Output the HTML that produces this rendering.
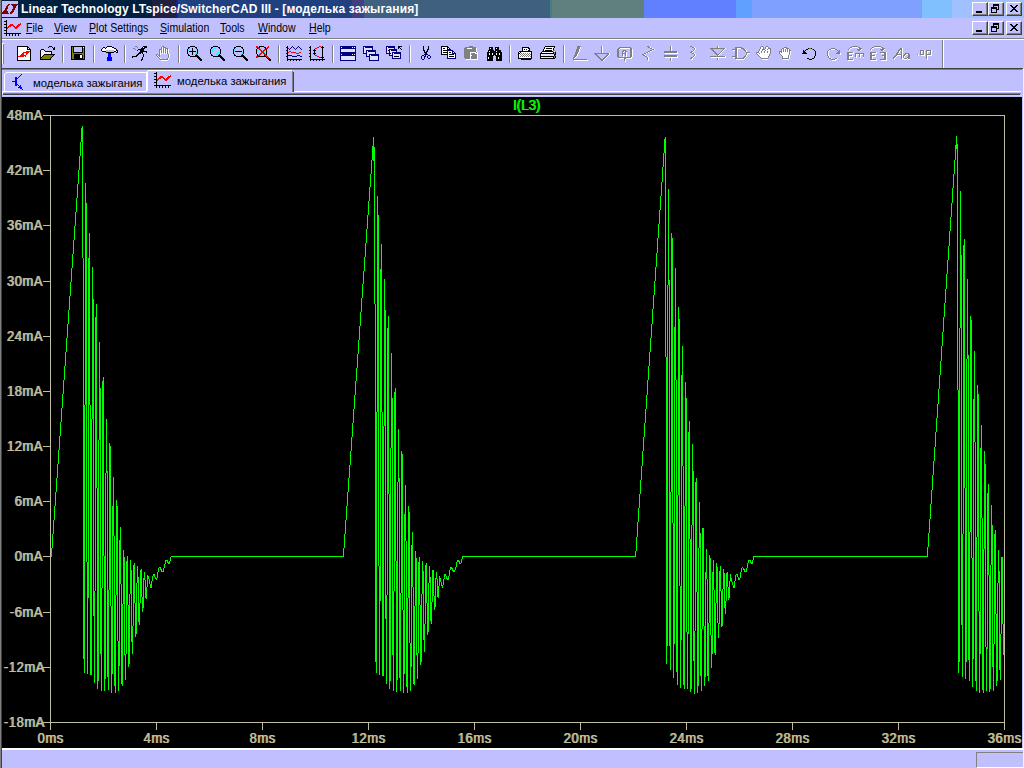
<!DOCTYPE html>
<html><head><meta charset="utf-8">
<style>
html,body{margin:0;padding:0;width:1024px;height:768px;overflow:hidden;background:#c0c0ff;font-family:"Liberation Sans",sans-serif;}
.a{position:absolute;}
.bl{position:absolute;left:0;width:1024px;}
#title span{position:absolute;}
.capbtn{position:absolute;width:16px;height:14px;box-sizing:border-box;background:#c0c0ff;
 border-top:1px solid #fff;border-left:1px solid #fff;border-right:1px solid #404040;border-bottom:1px solid #404040;}
.capbtn::after{content:"";position:absolute;left:0;top:0;right:0;bottom:0;border-right:1px solid #808080;border-bottom:1px solid #808080;}
.menu{position:absolute;top:21px;font-size:12px;color:#000;line-height:14px;white-space:nowrap;transform:scaleX(0.88);transform-origin:left;}
.menu u{text-decoration:underline;text-decoration-thickness:1px;text-underline-offset:1px;}
.sep{position:absolute;top:45px;width:1px;height:18px;background:#808080;border-right:1px solid #fff;}
.ylab{position:absolute;left:0;width:42.7px;text-align:right;font-size:14px;color:#c0c0a0;line-height:14px;text-shadow:1px 0 0 #c0c0a0;letter-spacing:0.7px;transform:scaleX(0.92);transform-origin:right;}
.xlab{position:absolute;width:60px;text-align:center;font-size:14px;color:#c0c0a0;line-height:14px;top:731px;text-shadow:1px 0 0 #c0c0a0;letter-spacing:0.7px;text-indent:0.7px;transform:scaleX(0.92);}
.ic{position:absolute;top:46px;}
</style></head><body>
<!-- left/right window borders -->
<div class="a" style="left:0;top:0;width:1px;height:768px;background:#808080"></div>
<div class="a" style="left:1px;top:0;width:1px;height:768px;background:#404040"></div>

<!-- title bar -->
<div class="a" style="left:2px;top:0;width:1022px;height:18px;background:#002040"></div>
<div class="a" style="left:152px;top:0;width:24px;height:18px;background:#202040"></div>
<div class="a" style="left:176px;top:0;width:2px;height:18px;background:#202080"></div>
<div class="a" style="left:178px;top:0;width:174px;height:18px;background:#204080"></div>
<div class="a" style="left:352px;top:0;width:12px;height:18px;background:#404080"></div>
<div class="a" style="left:364px;top:0;width:186px;height:18px;background:#406080"></div>
<div class="a" style="left:550px;top:0;width:2px;height:18px;background:#408080"></div>
<div class="a" style="left:552px;top:0;width:92px;height:18px;background:#608080"></div>
<div class="a" style="left:644px;top:0;width:92px;height:18px;background:#6080ff"></div>
<div class="a" style="left:736px;top:0;width:16px;height:18px;background:#60a0ff"></div>
<div class="a" style="left:752px;top:0;width:170px;height:18px;background:#80a0ff"></div>
<div class="a" style="left:922px;top:0;width:30px;height:18px;background:#80c0ff"></div>
<div class="a" style="left:952px;top:0;width:72px;height:18px;background:#a0c0ff"></div>
<!-- logo -->
<div class="a" style="left:2px;top:1px;width:16px;height:16px;background:#c0c0ff"></div>
<div class="a" style="left:21px;top:2px;font-weight:bold;font-size:12px;color:#fff;line-height:14px;white-space:nowrap;letter-spacing:0.12px">Linear Technology LTspice/SwitcherCAD III - [моделька зажыгания]</div>
<div class="capbtn" style="left:972px;top:2px"></div>
<div class="capbtn" style="left:988px;top:2px"></div>
<div class="capbtn" style="left:1006px;top:2px"></div>

<!-- menu bar -->
<div class="menu" style="left:26px"><u>F</u>ile</div>
<div class="menu" style="left:54px"><u>V</u>iew</div>
<div class="menu" style="left:89px"><u>P</u>lot Settings</div>
<div class="menu" style="left:160px"><u>S</u>imulation</div>
<div class="menu" style="left:220px"><u>T</u>ools</div>
<div class="menu" style="left:258px"><u>W</u>indow</div>
<div class="menu" style="left:309px"><u>H</u>elp</div>
<div class="capbtn" style="left:972px;top:21px"></div>
<div class="capbtn" style="left:988px;top:21px"></div>
<div class="capbtn" style="left:1006px;top:21px"></div>
<div class="bl" style="left:2px;top:38px;height:1px;background:#808080"></div>
<div class="bl" style="left:2px;top:39px;height:1px;background:#fff"></div>

<!-- toolbar -->
<div class="a" style="left:2px;top:43px;width:2px;height:21px;background:#fff"></div>
<div class="a" style="left:3px;top:44px;width:1px;height:20px;background:#808080"></div>
<div class="a" style="left:942px;top:40px;width:1px;height:28px;background:#808080"></div>
<div class="a" style="left:943px;top:40px;width:1px;height:28px;background:#fff"></div>

<div class="sep" style="left:62px"></div>
<div class="sep" style="left:93px"></div>
<div class="sep" style="left:124px"></div>
<div class="sep" style="left:178px"></div>
<div class="sep" style="left:278px"></div>
<div class="sep" style="left:332px"></div>
<div class="sep" style="left:409px"></div>
<div class="sep" style="left:509px"></div>
<div class="sep" style="left:563px"></div>
<div class="a" style="left:2px;top:68px;width:1021px;height:1px;background:#404040"></div>
<div class="a" style="left:2px;top:69px;width:1021px;height:1px;background:#808080"></div>

<!-- tab strip -->
<svg class="a" style="left:0;top:69px" width="1024" height="28" shape-rendering="crispEdges">
 <!-- inactive tab -->
 <path fill="none" stroke="#fff" d="M4.5,22V5.5L6.5,3.5H146.5V22.5H2"/>
 <!-- active tab -->
 <path fill="none" stroke="#fff" d="M147.5,22V2.5L148.5,1.5H292"/>
 <path fill="none" stroke="#808080" d="M292.5,2V22.5"/>
 <path fill="none" stroke="#404040" d="M293.5,3V22.5"/>
 <path fill="none" stroke="#fff" d="M294,22.5H1021"/>
 <path fill="none" stroke="#fff" d="M2.5,22V25"/>
 <path fill="none" stroke="#808080" d="M3,24.5H1021"/>
 <path fill="none" stroke="#404040" d="M3,25.5H1020"/>
 <path fill="none" stroke="#d0d0ff" d="M2,26.5H1022"/>
</svg>
<div class="a" style="left:33px;top:77px;font-size:11.3px;line-height:13px;white-space:nowrap">моделька зажыгания</div>
<div class="a" style="left:177px;top:75px;font-size:11.3px;line-height:13px;white-space:nowrap">моделька зажыгания</div>

<!-- plot area -->
<div class="a" style="left:2px;top:97px;width:1020px;height:651px;background:#000"></div>
<div class="a" style="left:1022px;top:69px;width:1px;height:699px;background:#c0c0ff"></div>
<div class="a" style="left:1023px;top:68px;width:1px;height:700px;background:#f0f0ff"></div>

<svg class="a" style="left:0;top:0" width="1024" height="768" shape-rendering="crispEdges">
 <g stroke="#c0c0a0" fill="none">
  <path d="M50.5,115V723M1004.5,115V723M50,115.5H1005M50,722.5H1005"/>
  <path d="M43,115.5h7M43,170.5h7M43,225.5h7M43,281.5h7M43,336.5h7M43,391.5h7M43,446.5h7M43,501.5h7M43,556.5h7M43,612.5h7M43,667.5h7M43,722.5h7"/>
  <path d="M50.5,723v7M156.5,723v7M262.5,723v7M368.5,723v7M474.5,723v7M580.5,723v7M686.5,723v7M792.5,723v7M898.5,723v7M1004.5,723v7"/>
 </g>
 <g fill="#00ff00"><rect x="51" y="548" width="1" height="9"/><rect x="52" y="534" width="1" height="14"/><rect x="53" y="520" width="1" height="14"/><rect x="54" y="506" width="1" height="14"/><rect x="55" y="492" width="1" height="14"/><rect x="56" y="478" width="1" height="14"/><rect x="57" y="464" width="1" height="14"/><rect x="58" y="450" width="1" height="14"/><rect x="59" y="436" width="1" height="14"/><rect x="60" y="422" width="1" height="14"/><rect x="61" y="408" width="1" height="14"/><rect x="62" y="394" width="1" height="14"/><rect x="63" y="380" width="1" height="14"/><rect x="64" y="366" width="1" height="14"/><rect x="65" y="352" width="1" height="14"/><rect x="66" y="338" width="1" height="14"/><rect x="67" y="324" width="1" height="14"/><rect x="68" y="310" width="1" height="14"/><rect x="69" y="296" width="1" height="14"/><rect x="70" y="282" width="1" height="14"/><rect x="71" y="268" width="1" height="14"/><rect x="72" y="254" width="1" height="14"/><rect x="73" y="240" width="1" height="14"/><rect x="74" y="226" width="1" height="14"/><rect x="75" y="212" width="1" height="14"/><rect x="76" y="198" width="1" height="14"/><rect x="77" y="184" width="1" height="14"/><rect x="78" y="170" width="1" height="14"/><rect x="79" y="156" width="1" height="14"/><rect x="80" y="142" width="1" height="14"/><rect x="81" y="128" width="1" height="14"/><rect x="82" y="126" width="1" height="132"/><rect x="83" y="258" width="1" height="401"/><rect x="84" y="405" width="1" height="268"/><rect x="85" y="183" width="1" height="222"/><rect x="86" y="203" width="1" height="359"/><rect x="87" y="562" width="1" height="112"/><rect x="88" y="258" width="1" height="340"/><rect x="89" y="233" width="1" height="172"/><rect x="90" y="405" width="1" height="270"/><rect x="91" y="419" width="1" height="256"/><rect x="92" y="267" width="1" height="152"/><rect x="93" y="299" width="1" height="317"/><rect x="94" y="591" width="1" height="92"/><rect x="95" y="317" width="1" height="274"/><rect x="96" y="304" width="1" height="184"/><rect x="97" y="488" width="1" height="201"/><rect x="98" y="440" width="1" height="241"/><rect x="99" y="342" width="1" height="98"/><rect x="100" y="388" width="1" height="266"/><rect x="101" y="588" width="1" height="103"/><rect x="102" y="381" width="1" height="207"/><rect x="103" y="377" width="1" height="179"/><rect x="104" y="556" width="1" height="135"/><rect x="105" y="473" width="1" height="206"/><rect x="106" y="419" width="1" height="54"/><rect x="107" y="471" width="1" height="206"/><rect x="108" y="590" width="1" height="100"/><rect x="109" y="443" width="1" height="147"/><rect x="110" y="446" width="1" height="160"/><rect x="111" y="606" width="1" height="87"/><rect x="112" y="506" width="1" height="168"/><rect x="113" y="477" width="1" height="59"/><rect x="114" y="536" width="1" height="150"/><rect x="115" y="595" width="1" height="98"/><rect x="116" y="500" width="1" height="95"/><rect x="117" y="506" width="1" height="135"/><rect x="118" y="641" width="1" height="50"/><rect x="119" y="540" width="1" height="126"/><rect x="120" y="527" width="1" height="57"/><rect x="121" y="584" width="1" height="100"/><rect x="122" y="604" width="1" height="82"/><rect x="123" y="550" width="1" height="54"/><rect x="124" y="557" width="1" height="98"/><rect x="125" y="654" width="1" height="26"/><rect x="126" y="561" width="1" height="93"/><rect x="127" y="556" width="1" height="49"/><rect x="128" y="605" width="1" height="62"/><rect x="129" y="594" width="1" height="70"/><rect x="130" y="560" width="1" height="34"/><rect x="131" y="570" width="1" height="72"/><rect x="132" y="626" width="1" height="28"/><rect x="133" y="565" width="1" height="61"/><rect x="134" y="563" width="1" height="40"/><rect x="135" y="603" width="1" height="34"/><rect x="136" y="583" width="1" height="51"/><rect x="137" y="566" width="1" height="17"/><rect x="138" y="577" width="1" height="45"/><rect x="139" y="603" width="1" height="22"/><rect x="140" y="570" width="1" height="33"/><rect x="141" y="569" width="1" height="28"/><rect x="142" y="597" width="1" height="15"/><rect x="143" y="578" width="1" height="30"/><rect x="144" y="572" width="1" height="8"/><rect x="145" y="580" width="1" height="18"/><rect x="146" y="587" width="1" height="12"/><rect x="147" y="575" width="1" height="12"/><rect x="148" y="576" width="1" height="3"/><rect x="149" y="579" width="1" height="5"/><rect x="150" y="584" width="1" height="4"/><rect x="151" y="581" width="1" height="7"/><rect x="152" y="576" width="1" height="5"/><rect x="153" y="574" width="1" height="2"/><rect x="154" y="574" width="1" height="3"/><rect x="155" y="577" width="1" height="2"/><rect x="156" y="578" width="1" height="2"/><rect x="157" y="572" width="1" height="6"/><rect x="158" y="568" width="1" height="4"/><rect x="160" y="567" width="1" height="3"/><rect x="161" y="569" width="1" height="3"/><rect x="163" y="568" width="1" height="4"/><rect x="164" y="564" width="1" height="4"/><rect x="165" y="560" width="1" height="4"/><rect x="167" y="560" width="1" height="3"/><rect x="168" y="562" width="1" height="2"/><rect x="169" y="561" width="1" height="3"/><rect x="170" y="557" width="1" height="4"/><rect x="343" y="548" width="1" height="9"/><rect x="344" y="534" width="1" height="14"/><rect x="345" y="520" width="1" height="14"/><rect x="346" y="506" width="1" height="14"/><rect x="347" y="492" width="1" height="14"/><rect x="348" y="478" width="1" height="14"/><rect x="349" y="465" width="1" height="13"/><rect x="350" y="451" width="1" height="14"/><rect x="351" y="437" width="1" height="14"/><rect x="352" y="423" width="1" height="14"/><rect x="353" y="409" width="1" height="14"/><rect x="354" y="395" width="1" height="14"/><rect x="355" y="381" width="1" height="14"/><rect x="356" y="368" width="1" height="13"/><rect x="357" y="354" width="1" height="14"/><rect x="358" y="340" width="1" height="14"/><rect x="359" y="326" width="1" height="14"/><rect x="360" y="312" width="1" height="14"/><rect x="361" y="298" width="1" height="14"/><rect x="362" y="284" width="1" height="14"/><rect x="363" y="271" width="1" height="13"/><rect x="364" y="257" width="1" height="14"/><rect x="365" y="243" width="1" height="14"/><rect x="366" y="229" width="1" height="14"/><rect x="367" y="215" width="1" height="14"/><rect x="368" y="201" width="1" height="14"/><rect x="369" y="187" width="1" height="14"/><rect x="370" y="174" width="1" height="13"/><rect x="371" y="160" width="1" height="14"/><rect x="372" y="146" width="1" height="14"/><rect x="373" y="137" width="1" height="24"/><rect x="374" y="147" width="1" height="157"/><rect x="375" y="304" width="1" height="358"/><rect x="376" y="412" width="1" height="261"/><rect x="377" y="196" width="1" height="216"/><rect x="378" y="215" width="1" height="351"/><rect x="379" y="566" width="1" height="109"/><rect x="380" y="269" width="1" height="332"/><rect x="381" y="244" width="1" height="168"/><rect x="382" y="412" width="1" height="264"/><rect x="383" y="426" width="1" height="250"/><rect x="384" y="279" width="1" height="147"/><rect x="385" y="310" width="1" height="309"/><rect x="386" y="595" width="1" height="89"/><rect x="387" y="328" width="1" height="267"/><rect x="388" y="316" width="1" height="178"/><rect x="389" y="494" width="1" height="195"/><rect x="390" y="448" width="1" height="233"/><rect x="391" y="353" width="1" height="95"/><rect x="392" y="398" width="1" height="257"/><rect x="393" y="591" width="1" height="100"/><rect x="394" y="392" width="1" height="199"/><rect x="395" y="388" width="1" height="173"/><rect x="396" y="561" width="1" height="131"/><rect x="397" y="482" width="1" height="198"/><rect x="398" y="429" width="1" height="53"/><rect x="399" y="478" width="1" height="200"/><rect x="400" y="593" width="1" height="98"/><rect x="401" y="451" width="1" height="142"/><rect x="402" y="454" width="1" height="156"/><rect x="403" y="610" width="1" height="83"/><rect x="404" y="514" width="1" height="160"/><rect x="405" y="485" width="1" height="56"/><rect x="406" y="541" width="1" height="146"/><rect x="407" y="598" width="1" height="95"/><rect x="408" y="506" width="1" height="92"/><rect x="409" y="512" width="1" height="131"/><rect x="410" y="643" width="1" height="48"/><rect x="411" y="545" width="1" height="122"/><rect x="412" y="532" width="1" height="55"/><rect x="413" y="587" width="1" height="97"/><rect x="414" y="606" width="1" height="79"/><rect x="415" y="551" width="1" height="55"/><rect x="416" y="558" width="1" height="97"/><rect x="417" y="653" width="1" height="26"/><rect x="418" y="562" width="1" height="91"/><rect x="419" y="557" width="1" height="48"/><rect x="420" y="605" width="1" height="60"/><rect x="421" y="594" width="1" height="68"/><rect x="422" y="561" width="1" height="33"/><rect x="423" y="571" width="1" height="69"/><rect x="424" y="624" width="1" height="28"/><rect x="425" y="565" width="1" height="59"/><rect x="426" y="563" width="1" height="40"/><rect x="427" y="603" width="1" height="32"/><rect x="428" y="583" width="1" height="49"/><rect x="429" y="566" width="1" height="17"/><rect x="430" y="577" width="1" height="44"/><rect x="431" y="602" width="1" height="22"/><rect x="432" y="570" width="1" height="32"/><rect x="433" y="570" width="1" height="26"/><rect x="434" y="596" width="1" height="14"/><rect x="435" y="578" width="1" height="29"/><rect x="436" y="572" width="1" height="7"/><rect x="437" y="579" width="1" height="18"/><rect x="438" y="586" width="1" height="12"/><rect x="439" y="576" width="1" height="10"/><rect x="440" y="578" width="1" height="4"/><rect x="441" y="582" width="1" height="4"/><rect x="442" y="585" width="1" height="3"/><rect x="443" y="579" width="1" height="6"/><rect x="444" y="574" width="1" height="5"/><rect x="445" y="574" width="1" height="2"/><rect x="446" y="576" width="1" height="3"/><rect x="447" y="578" width="1" height="2"/><rect x="448" y="576" width="1" height="4"/><rect x="449" y="570" width="1" height="6"/><rect x="450" y="567" width="1" height="3"/><rect x="451" y="567" width="1" height="2"/><rect x="452" y="568" width="1" height="3"/><rect x="453" y="570" width="1" height="2"/><rect x="454" y="570" width="1" height="2"/><rect x="455" y="567" width="1" height="3"/><rect x="456" y="562" width="1" height="5"/><rect x="457" y="560" width="1" height="2"/><rect x="458" y="560" width="1" height="2"/><rect x="459" y="561" width="1" height="3"/><rect x="461" y="559" width="1" height="4"/><rect x="462" y="556" width="1" height="3"/><rect x="635" y="551" width="1" height="6"/><rect x="636" y="537" width="1" height="14"/><rect x="637" y="522" width="1" height="15"/><rect x="638" y="508" width="1" height="14"/><rect x="639" y="494" width="1" height="14"/><rect x="640" y="480" width="1" height="14"/><rect x="641" y="466" width="1" height="14"/><rect x="642" y="451" width="1" height="15"/><rect x="643" y="437" width="1" height="14"/><rect x="644" y="423" width="1" height="14"/><rect x="645" y="409" width="1" height="14"/><rect x="646" y="395" width="1" height="14"/><rect x="647" y="380" width="1" height="15"/><rect x="648" y="366" width="1" height="14"/><rect x="649" y="352" width="1" height="14"/><rect x="650" y="338" width="1" height="14"/><rect x="651" y="324" width="1" height="14"/><rect x="652" y="309" width="1" height="15"/><rect x="653" y="295" width="1" height="14"/><rect x="654" y="281" width="1" height="14"/><rect x="655" y="267" width="1" height="14"/><rect x="656" y="253" width="1" height="14"/><rect x="657" y="238" width="1" height="15"/><rect x="658" y="224" width="1" height="14"/><rect x="659" y="210" width="1" height="14"/><rect x="660" y="196" width="1" height="14"/><rect x="661" y="182" width="1" height="14"/><rect x="662" y="167" width="1" height="15"/><rect x="663" y="153" width="1" height="14"/><rect x="664" y="139" width="1" height="14"/><rect x="665" y="137" width="1" height="220"/><rect x="666" y="357" width="1" height="307"/><rect x="667" y="285" width="1" height="361"/><rect x="668" y="189" width="1" height="96"/><rect x="669" y="280" width="1" height="366"/><rect x="670" y="492" width="1" height="178"/><rect x="671" y="233" width="1" height="259"/><rect x="672" y="238" width="1" height="285"/><rect x="673" y="523" width="1" height="155"/><rect x="674" y="327" width="1" height="317"/><rect x="675" y="268" width="1" height="112"/><rect x="676" y="380" width="1" height="292"/><rect x="677" y="495" width="1" height="190"/><rect x="678" y="307" width="1" height="188"/><rect x="679" y="319" width="1" height="267"/><rect x="680" y="586" width="1" height="102"/><rect x="681" y="375" width="1" height="265"/><rect x="682" y="346" width="1" height="120"/><rect x="683" y="466" width="1" height="219"/><rect x="684" y="506" width="1" height="183"/><rect x="685" y="382" width="1" height="124"/><rect x="686" y="398" width="1" height="234"/><rect x="687" y="632" width="1" height="57"/><rect x="688" y="432" width="1" height="202"/><rect x="689" y="421" width="1" height="118"/><rect x="690" y="539" width="1" height="153"/><rect x="691" y="525" width="1" height="164"/><rect x="692" y="444" width="1" height="81"/><rect x="693" y="471" width="1" height="190"/><rect x="694" y="631" width="1" height="63"/><rect x="695" y="482" width="1" height="149"/><rect x="696" y="478" width="1" height="114"/><rect x="697" y="592" width="1" height="101"/><rect x="698" y="548" width="1" height="138"/><rect x="699" y="502" width="1" height="46"/><rect x="700" y="533" width="1" height="143"/><rect x="701" y="629" width="1" height="62"/><rect x="702" y="528" width="1" height="101"/><rect x="703" y="528" width="1" height="98"/><rect x="704" y="626" width="1" height="60"/><rect x="705" y="572" width="1" height="105"/><rect x="706" y="549" width="1" height="30"/><rect x="707" y="579" width="1" height="97"/><rect x="708" y="623" width="1" height="58"/><rect x="709" y="555" width="1" height="68"/><rect x="710" y="558" width="1" height="77"/><rect x="711" y="635" width="1" height="33"/><rect x="712" y="572" width="1" height="82"/><rect x="713" y="560" width="1" height="30"/><rect x="714" y="590" width="1" height="63"/><rect x="715" y="603" width="1" height="52"/><rect x="716" y="563" width="1" height="40"/><rect x="717" y="567" width="1" height="56"/><rect x="718" y="623" width="1" height="15"/><rect x="719" y="571" width="1" height="53"/><rect x="720" y="566" width="1" height="25"/><rect x="721" y="591" width="1" height="36"/><rect x="722" y="589" width="1" height="37"/><rect x="723" y="569" width="1" height="20"/><rect x="724" y="573" width="1" height="35"/><rect x="725" y="601" width="1" height="13"/><rect x="726" y="573" width="1" height="28"/><rect x="727" y="572" width="1" height="15"/><rect x="728" y="587" width="1" height="13"/><rect x="729" y="581" width="1" height="17"/><rect x="730" y="574" width="1" height="7"/><rect x="731" y="578" width="1" height="4"/><rect x="732" y="582" width="1" height="3"/><rect x="733" y="585" width="1" height="3"/><rect x="734" y="581" width="1" height="7"/><rect x="735" y="575" width="1" height="6"/><rect x="737" y="574" width="1" height="3"/><rect x="738" y="577" width="1" height="3"/><rect x="739" y="578" width="1" height="2"/><rect x="740" y="572" width="1" height="6"/><rect x="741" y="568" width="1" height="4"/><rect x="743" y="568" width="1" height="2"/><rect x="744" y="569" width="1" height="3"/><rect x="746" y="568" width="1" height="4"/><rect x="747" y="563" width="1" height="5"/><rect x="748" y="560" width="1" height="3"/><rect x="750" y="560" width="1" height="3"/><rect x="751" y="562" width="1" height="2"/><rect x="752" y="560" width="1" height="4"/><rect x="753" y="556" width="1" height="4"/><rect x="927" y="547" width="1" height="10"/><rect x="928" y="533" width="1" height="14"/><rect x="929" y="519" width="1" height="14"/><rect x="930" y="504" width="1" height="15"/><rect x="931" y="490" width="1" height="14"/><rect x="932" y="475" width="1" height="15"/><rect x="933" y="461" width="1" height="14"/><rect x="934" y="447" width="1" height="14"/><rect x="935" y="432" width="1" height="15"/><rect x="936" y="418" width="1" height="14"/><rect x="937" y="404" width="1" height="14"/><rect x="938" y="389" width="1" height="15"/><rect x="939" y="375" width="1" height="14"/><rect x="940" y="361" width="1" height="14"/><rect x="941" y="346" width="1" height="15"/><rect x="942" y="332" width="1" height="14"/><rect x="943" y="317" width="1" height="15"/><rect x="944" y="303" width="1" height="14"/><rect x="945" y="289" width="1" height="14"/><rect x="946" y="274" width="1" height="15"/><rect x="947" y="260" width="1" height="14"/><rect x="948" y="246" width="1" height="14"/><rect x="949" y="231" width="1" height="15"/><rect x="950" y="217" width="1" height="14"/><rect x="951" y="203" width="1" height="14"/><rect x="952" y="188" width="1" height="15"/><rect x="953" y="174" width="1" height="14"/><rect x="954" y="160" width="1" height="14"/><rect x="955" y="145" width="1" height="15"/><rect x="956" y="136" width="1" height="13"/><rect x="957" y="144" width="1" height="246"/><rect x="958" y="390" width="1" height="283"/><rect x="959" y="328" width="1" height="334"/><rect x="960" y="191" width="1" height="137"/><rect x="961" y="255" width="1" height="370"/><rect x="962" y="534" width="1" height="143"/><rect x="963" y="245" width="1" height="289"/><rect x="964" y="239" width="1" height="249"/><rect x="965" y="488" width="1" height="191"/><rect x="966" y="359" width="1" height="303"/><rect x="967" y="279" width="1" height="80"/><rect x="968" y="355" width="1" height="305"/><rect x="969" y="532" width="1" height="149"/><rect x="970" y="316" width="1" height="216"/><rect x="971" y="320" width="1" height="238"/><rect x="972" y="558" width="1" height="129"/><rect x="973" y="399" width="1" height="260"/><rect x="974" y="351" width="1" height="91"/><rect x="975" y="442" width="1" height="239"/><rect x="976" y="537" width="1" height="154"/><rect x="977" y="385" width="1" height="152"/><rect x="978" y="394" width="1" height="217"/><rect x="979" y="611" width="1" height="82"/><rect x="980" y="448" width="1" height="206"/><rect x="981" y="425" width="1" height="93"/><rect x="982" y="518" width="1" height="172"/><rect x="983" y="549" width="1" height="144"/><rect x="984" y="451" width="1" height="98"/><rect x="985" y="464" width="1" height="183"/><rect x="986" y="647" width="1" height="44"/><rect x="987" y="493" width="1" height="156"/><rect x="988" y="484" width="1" height="91"/><rect x="989" y="575" width="1" height="117"/><rect x="990" y="565" width="1" height="124"/><rect x="991" y="505" width="1" height="60"/><rect x="992" y="525" width="1" height="142"/><rect x="993" y="644" width="1" height="47"/><rect x="994" y="534" width="1" height="110"/><rect x="995" y="530" width="1" height="84"/><rect x="996" y="614" width="1" height="72"/><rect x="997" y="583" width="1" height="98"/><rect x="998" y="550" width="1" height="33"/><rect x="999" y="571" width="1" height="99"/><rect x="1000" y="634" width="1" height="46"/><rect x="1001" y="557" width="1" height="77"/><rect x="1002" y="557" width="1" height="67"/><rect x="1003" y="624" width="1" height="31"/><rect x="171" y="556" width="172" height="1"/><rect x="463" y="556" width="172" height="1"/><rect x="754" y="556" width="173" height="1"/><rect x="166" y="560" width="1" height="1"/><rect x="749" y="560" width="1" height="1"/><rect x="460" y="563" width="1" height="1"/><rect x="159" y="567" width="1" height="1"/><rect x="742" y="567" width="1" height="1"/><rect x="162" y="571" width="1" height="1"/><rect x="745" y="571" width="1" height="1"/><rect x="736" y="574" width="1" height="1"/></g>
 <g fill="none" stroke="#00ff00" stroke-width="1"></g>
</svg>

<div class="ylab" style="top:108px">48mA</div>
<div class="ylab" style="top:163px">42mA</div>
<div class="ylab" style="top:218px">36mA</div>
<div class="ylab" style="top:274px">30mA</div>
<div class="ylab" style="top:329px">24mA</div>
<div class="ylab" style="top:384px">18mA</div>
<div class="ylab" style="top:439px">12mA</div>
<div class="ylab" style="top:494px">6mA</div>
<div class="ylab" style="top:549px">0mA</div>
<div class="ylab" style="top:605px">-6mA</div>
<div class="ylab" style="top:660px">-12mA</div>
<div class="ylab" style="top:715px">-18mA</div>

<div class="xlab" style="left:20px">0ms</div>
<div class="xlab" style="left:126px">4ms</div>
<div class="xlab" style="left:232px">8ms</div>
<div class="xlab" style="left:338px">12ms</div>
<div class="xlab" style="left:444px">16ms</div>
<div class="xlab" style="left:550px">20ms</div>
<div class="xlab" style="left:656px">24ms</div>
<div class="xlab" style="left:762px">28ms</div>
<div class="xlab" style="left:868px">32ms</div>
<div class="xlab" style="left:974px">36ms</div>

<div class="a" style="left:497px;top:98px;width:60px;text-align:center;font-size:14px;line-height:14px;color:#00ff00;text-shadow:1px 0 0 #00ff00;transform:scaleX(0.95);transform-origin:16.8px 0">I(L3)</div>

<!-- status bar -->
<div class="a" style="left:2px;top:748px;width:1021px;height:2px;background:#fff"></div>
<div class="a" style="left:976px;top:752px;width:47px;height:1px;background:#808080"></div>
<div class="a" style="left:976px;top:752px;width:1px;height:15px;background:#808080"></div>
<div class="a" style="left:977px;top:767px;width:47px;height:1px;background:#fff"></div>
<svg class="a" style="left:17px;top:46px" width="14" height="15" shape-rendering="crispEdges"><path fill="#000000" d="M0,0h11v1h-11zM0,1h1v1h-1zM10,1h2v1h-2zM0,2h1v1h-1zM10,2h1v1h-1zM12,2h1v1h-1zM0,3h1v1h-1zM10,3h4v1h-4zM0,4h1v1h-1zM13,4h1v1h-1zM0,5h1v1h-1zM13,5h1v1h-1zM0,6h1v1h-1zM13,6h1v1h-1zM0,7h1v1h-1zM13,7h1v1h-1zM0,8h1v1h-1zM13,8h1v1h-1zM0,9h1v1h-1zM13,9h1v1h-1zM0,10h1v1h-1zM13,10h1v1h-1zM0,11h1v1h-1zM13,11h1v1h-1zM0,12h1v1h-1zM13,12h1v1h-1zM0,13h1v1h-1zM13,13h1v1h-1zM0,14h14v1h-14z"/><path fill="#ffffff" d="M1,1h9v1h-9zM1,2h9v1h-9zM11,2h1v1h-1zM1,3h9v1h-9zM1,4h12v1h-12zM1,5h8v1h-8zM1,6h5v1h-5zM12,6h1v1h-1zM1,7h4v1h-4zM7,7h2v1h-2zM11,7h2v1h-2zM1,8h3v1h-3zM7,8h2v1h-2zM10,8h3v1h-3zM1,9h2v1h-2zM9,9h4v1h-4zM7,10h1v1h-1zM9,10h4v1h-4zM1,11h12v1h-12zM1,12h12v1h-12zM1,13h12v1h-12z"/><path fill="#ff0000" d="M9,5h4v1h-4zM6,6h6v1h-6zM5,7h2v1h-2zM9,7h2v1h-2zM4,8h3v1h-3zM9,8h1v1h-1zM3,9h6v1h-6zM1,10h6v1h-6zM8,10h1v1h-1z"/></svg>
<svg class="a" style="left:40px;top:46px" width="15" height="14" shape-rendering="crispEdges"><path fill="#000000" d="M9,0h3v1h-3zM8,1h1v1h-1zM12,1h1v1h-1zM14,1h1v1h-1zM13,2h2v1h-2zM1,3h3v1h-3zM13,3h2v1h-2zM0,4h1v1h-1zM4,4h1v1h-1zM0,5h1v1h-1zM5,5h7v1h-7zM0,6h1v1h-1zM11,6h1v1h-1zM0,7h1v1h-1zM11,7h1v1h-1zM0,8h1v1h-1zM4,8h11v1h-11zM0,9h1v1h-1zM3,9h1v1h-1zM13,9h1v1h-1zM0,10h1v1h-1zM2,10h1v1h-1zM12,10h1v1h-1zM0,11h2v1h-2zM11,11h1v1h-1zM0,12h1v1h-1zM10,12h1v1h-1zM0,13h11v1h-11z"/><path fill="#ffff00" d="M1,4h1v1h-1zM3,4h1v1h-1zM2,5h1v1h-1zM4,5h1v1h-1zM1,6h1v1h-1zM3,6h1v1h-1zM5,6h1v1h-1zM7,6h1v1h-1zM9,6h1v1h-1zM2,7h1v1h-1zM4,7h1v1h-1zM6,7h1v1h-1zM8,7h1v1h-1zM10,7h1v1h-1zM1,8h1v1h-1zM3,8h1v1h-1zM2,9h1v1h-1zM1,10h1v1h-1z"/><path fill="#ffffff" d="M2,4h1v1h-1zM1,5h1v1h-1zM3,5h1v1h-1zM2,6h1v1h-1zM4,6h1v1h-1zM6,6h1v1h-1zM8,6h1v1h-1zM10,6h1v1h-1zM1,7h1v1h-1zM3,7h1v1h-1zM5,7h1v1h-1zM7,7h1v1h-1zM9,7h1v1h-1zM2,8h1v1h-1zM1,9h1v1h-1z"/><path fill="#808000" d="M4,9h9v1h-9zM3,10h9v1h-9zM2,11h9v1h-9zM1,12h9v1h-9z"/></svg>
<svg class="a" style="left:71px;top:46px" width="14" height="14" shape-rendering="crispEdges"><path fill="#000000" d="M0,0h14v1h-14zM0,1h1v1h-1zM2,1h1v1h-1zM11,1h1v1h-1zM13,1h1v1h-1zM0,2h1v1h-1zM2,2h1v1h-1zM11,2h1v1h-1zM13,2h1v1h-1zM0,3h1v1h-1zM2,3h1v1h-1zM11,3h1v1h-1zM13,3h1v1h-1zM0,4h1v1h-1zM2,4h1v1h-1zM11,4h1v1h-1zM13,4h1v1h-1zM0,5h1v1h-1zM2,5h1v1h-1zM11,5h1v1h-1zM13,5h1v1h-1zM0,6h1v1h-1zM2,6h10v1h-10zM13,6h1v1h-1zM0,7h1v1h-1zM13,7h1v1h-1zM0,8h1v1h-1zM3,8h8v1h-8zM13,8h1v1h-1zM0,9h1v1h-1zM3,9h6v1h-6zM11,9h1v1h-1zM13,9h1v1h-1zM0,10h1v1h-1zM3,10h6v1h-6zM11,10h1v1h-1zM13,10h1v1h-1zM0,11h1v1h-1zM3,11h6v1h-6zM11,11h1v1h-1zM13,11h1v1h-1zM0,12h1v1h-1zM3,12h9v1h-9zM13,12h1v1h-1zM0,13h14v1h-14z"/><path fill="#808000" d="M1,1h1v1h-1zM1,2h1v1h-1zM12,2h1v1h-1zM1,3h1v1h-1zM12,3h1v1h-1zM1,4h1v1h-1zM12,4h1v1h-1zM1,5h1v1h-1zM12,5h1v1h-1zM1,6h1v1h-1zM12,6h1v1h-1zM1,7h12v1h-12zM1,8h2v1h-2zM11,8h2v1h-2zM1,9h2v1h-2zM12,9h1v1h-1zM1,10h2v1h-2zM12,10h1v1h-1zM1,11h2v1h-2zM12,11h1v1h-1zM1,12h2v1h-2zM12,12h1v1h-1z"/><path fill="#ffffff" d="M12,1h1v1h-1zM9,9h2v1h-2zM9,10h2v1h-2zM9,11h2v1h-2z"/></svg>
<svg class="a" style="left:101px;top:46px" width="17" height="15" shape-rendering="crispEdges"><path fill="#000000" d="M6,0h5v1h-5zM2,1h2v1h-2zM5,1h1v1h-1zM11,1h2v1h-2zM1,2h1v1h-1zM4,2h1v1h-1zM13,2h2v1h-2zM0,3h1v1h-1zM15,3h1v1h-1zM0,4h1v1h-1zM15,4h2v1h-2zM1,5h4v1h-4zM13,5h2v1h-2zM16,5h1v1h-1zM5,6h8v1h-8zM15,6h2v1h-2z"/><path fill="#ffffff" d="M6,1h5v1h-5zM2,2h2v1h-2zM5,2h8v1h-8zM1,3h14v1h-14zM1,4h4v1h-4zM13,4h2v1h-2zM15,5h1v1h-1z"/><path fill="#c0c0c0" d="M5,4h8v1h-8zM5,5h8v1h-8z"/><path fill="#0000ff" d="M7,7h3v1h-3zM7,8h3v1h-3zM7,9h3v1h-3zM7,10h3v1h-3zM6,11h5v1h-5zM6,12h5v1h-5zM6,13h5v1h-5zM6,14h5v1h-5z"/></svg>
<svg class="a" style="left:132px;top:46px" width="15" height="15" shape-rendering="crispEdges"><path fill="#808080" d="M3,0h2v1h-2zM5,1h1v1h-1zM1,2h2v1h-2zM3,3h1v1h-1z"/><path fill="#000000" d="M11,0h4v1h-4zM10,1h1v1h-1zM12,1h3v1h-3zM9,2h4v1h-4zM6,3h6v1h-6zM5,4h1v1h-1zM8,4h4v1h-4zM8,5h7v1h-7zM7,6h4v1h-4zM14,6h1v1h-1zM6,7h3v1h-3zM10,7h1v1h-1zM5,8h2v1h-2zM11,8h1v1h-1zM4,9h2v1h-2zM11,9h1v1h-1zM0,10h5v1h-5zM11,10h1v1h-1zM0,11h1v1h-1zM10,11h1v1h-1zM10,12h1v1h-1zM9,13h2v1h-2zM9,14h1v1h-1z"/><path fill="#ffffff" d="M11,1h1v1h-1z"/></svg>
<svg class="a" style="left:156px;top:46px" width="15" height="15" shape-rendering="crispEdges"><path fill="#808080" d="M6,0h2v1h-2zM5,1h1v1h-1zM7,1h3v1h-3zM5,2h1v1h-1zM7,2h1v1h-1zM9,2h3v1h-3zM3,3h3v1h-3zM7,3h1v1h-1zM9,3h1v1h-1zM11,3h1v1h-1zM3,4h1v1h-1zM5,4h1v1h-1zM7,4h1v1h-1zM9,4h1v1h-1zM11,4h1v1h-1zM3,5h1v1h-1zM5,5h1v1h-1zM7,5h1v1h-1zM9,5h1v1h-1zM11,5h1v1h-1zM3,6h1v1h-1zM5,6h1v1h-1zM7,6h1v1h-1zM9,6h1v1h-1zM11,6h1v1h-1zM3,7h1v1h-1zM11,7h1v1h-1zM0,8h2v1h-2zM3,8h1v1h-1zM12,8h1v1h-1zM0,9h1v1h-1zM2,9h2v1h-2zM12,9h1v1h-1zM1,10h1v1h-1zM3,10h1v1h-1zM12,10h1v1h-1zM2,11h1v1h-1zM12,11h1v1h-1zM3,12h1v1h-1zM11,12h1v1h-1zM4,13h8v1h-8z"/><path fill="#ffffff" d="M6,1h1v1h-1zM6,2h1v1h-1zM8,2h1v1h-1zM6,3h1v1h-1zM8,3h1v1h-1zM10,3h1v1h-1zM12,3h1v1h-1zM4,4h1v1h-1zM6,4h1v1h-1zM8,4h1v1h-1zM10,4h1v1h-1zM12,4h1v1h-1zM4,5h1v1h-1zM6,5h1v1h-1zM8,5h1v1h-1zM10,5h1v1h-1zM12,5h1v1h-1zM4,6h1v1h-1zM6,6h1v1h-1zM8,6h1v1h-1zM10,6h1v1h-1zM12,6h1v1h-1zM4,7h1v1h-1zM6,7h1v1h-1zM8,7h1v1h-1zM10,7h1v1h-1zM12,7h1v1h-1zM4,8h1v1h-1zM13,8h1v1h-1zM1,9h1v1h-1zM13,9h1v1h-1zM2,10h1v1h-1zM13,10h1v1h-1zM3,11h1v1h-1zM13,11h1v1h-1zM4,12h1v1h-1zM12,12h1v1h-1zM12,13h1v1h-1zM5,14h7v1h-7z"/></svg>
<svg class="a" style="left:186px;top:46px" width="17" height="15" shape-rendering="crispEdges"><path fill="#000000" d="M4,0h5v1h-5zM2,1h2v1h-2zM9,1h2v1h-2zM2,2h1v1h-1zM6,2h1v1h-1zM10,2h1v1h-1zM1,3h1v1h-1zM6,3h1v1h-1zM11,3h1v1h-1zM1,4h1v1h-1zM6,4h1v1h-1zM11,4h1v1h-1zM1,5h1v1h-1zM3,5h7v1h-7zM11,5h1v1h-1zM1,6h1v1h-1zM6,6h1v1h-1zM11,6h1v1h-1zM1,7h1v1h-1zM6,7h1v1h-1zM11,7h1v1h-1zM2,8h1v1h-1zM6,8h1v1h-1zM10,8h1v1h-1zM2,9h2v1h-2zM9,9h3v1h-3zM4,10h9v1h-9zM11,11h3v1h-3zM12,12h3v1h-3zM13,13h3v1h-3zM14,14h2v1h-2z"/><path fill="#00ffff" d="M3,2h1v1h-1zM2,3h1v1h-1zM2,4h1v1h-1zM10,6h1v1h-1zM10,7h1v1h-1zM9,8h1v1h-1z"/></svg>
<svg class="a" style="left:209px;top:46px" width="17" height="15" shape-rendering="crispEdges"><path fill="#000000" d="M4,0h5v1h-5zM2,1h2v1h-2zM9,1h2v1h-2zM2,2h1v1h-1zM10,2h1v1h-1zM1,3h1v1h-1zM11,3h1v1h-1zM1,4h1v1h-1zM11,4h1v1h-1zM1,5h1v1h-1zM11,5h1v1h-1zM1,6h1v1h-1zM11,6h1v1h-1zM1,7h1v1h-1zM11,7h1v1h-1zM2,8h1v1h-1zM10,8h1v1h-1zM2,9h2v1h-2zM9,9h3v1h-3zM4,10h9v1h-9zM11,11h3v1h-3zM12,12h3v1h-3zM13,13h3v1h-3zM14,14h2v1h-2z"/><path fill="#00ffff" d="M5,2h2v1h-2zM4,3h1v1h-1zM3,4h2v1h-2zM3,5h1v1h-1zM9,6h1v1h-1zM8,7h2v1h-2zM7,8h2v1h-2z"/></svg>
<svg class="a" style="left:232px;top:46px" width="17" height="15" shape-rendering="crispEdges"><path fill="#000000" d="M4,0h5v1h-5zM2,1h2v1h-2zM9,1h2v1h-2zM2,2h1v1h-1zM10,2h1v1h-1zM1,3h1v1h-1zM11,3h1v1h-1zM1,4h1v1h-1zM11,4h1v1h-1zM1,5h1v1h-1zM3,5h7v1h-7zM11,5h1v1h-1zM1,6h1v1h-1zM11,6h1v1h-1zM1,7h1v1h-1zM11,7h1v1h-1zM2,8h1v1h-1zM10,8h1v1h-1zM2,9h2v1h-2zM9,9h3v1h-3zM4,10h9v1h-9zM11,11h3v1h-3zM12,12h3v1h-3zM13,13h3v1h-3zM14,14h2v1h-2z"/><path fill="#00ffff" d="M3,2h1v1h-1zM2,3h1v1h-1zM2,4h1v1h-1zM10,6h1v1h-1zM10,7h1v1h-1zM9,8h1v1h-1z"/></svg>
<svg class="a" style="left:255px;top:46px" width="17" height="15" shape-rendering="crispEdges"><path fill="#ff0000" d="M1,0h2v1h-2zM13,0h1v1h-1zM1,1h3v1h-3zM12,1h2v1h-2zM3,2h2v1h-2zM11,2h2v1h-2zM4,3h2v1h-2zM9,3h2v1h-2zM5,4h2v1h-2zM8,4h2v1h-2zM6,5h3v1h-3zM6,6h3v1h-3zM5,7h2v1h-2zM8,7h2v1h-2zM4,8h2v1h-2zM9,8h2v1h-2zM3,9h2v1h-2zM10,9h2v1h-2zM1,10h2v1h-2zM11,10h2v1h-2zM1,11h2v1h-2zM12,11h2v1h-2zM13,12h1v1h-1z"/><path fill="#000000" d="M4,0h5v1h-5zM4,1h1v1h-1zM9,1h2v1h-2zM2,2h1v1h-1zM10,2h1v1h-1zM1,3h1v1h-1zM11,3h1v1h-1zM1,4h1v1h-1zM11,4h1v1h-1zM1,5h1v1h-1zM11,5h1v1h-1zM1,6h1v1h-1zM11,6h1v1h-1zM1,7h1v1h-1zM11,7h1v1h-1zM2,8h1v1h-1zM11,8h1v1h-1zM2,9h1v1h-1zM9,9h1v1h-1zM3,10h8v1h-8zM11,11h1v1h-1zM12,12h1v1h-1zM14,12h1v1h-1zM13,13h3v1h-3zM14,14h2v1h-2z"/><path fill="#00ffff" d="M6,2h1v1h-1zM3,3h1v1h-1zM2,4h2v1h-2zM9,6h1v1h-1zM10,7h1v1h-1zM8,8h1v1h-1z"/></svg>
<svg class="a" style="left:286px;top:46px" width="16" height="15" shape-rendering="crispEdges"><path fill="#000000" d="M1,0h1v1h-1zM0,1h2v1h-2zM1,2h1v1h-1zM1,3h1v1h-1zM0,4h2v1h-2zM1,5h1v1h-1zM1,6h1v1h-1zM0,7h2v1h-2zM1,8h1v1h-1zM1,9h1v1h-1zM0,10h2v1h-2zM1,11h1v1h-1zM1,12h1v1h-1zM1,13h15v1h-15zM1,14h1v1h-1zM4,14h1v1h-1zM7,14h1v1h-1zM10,14h1v1h-1zM13,14h1v1h-1z"/><path fill="#000080" d="M6,0h1v1h-1zM12,0h1v1h-1zM5,1h1v1h-1zM7,1h1v1h-1zM11,1h1v1h-1zM13,1h1v1h-1zM4,2h1v1h-1zM8,2h1v1h-1zM10,2h1v1h-1zM14,2h1v1h-1zM3,3h1v1h-1zM15,3h1v1h-1zM2,9h4v1h-4zM11,9h3v1h-3zM6,10h5v1h-5zM14,10h2v1h-2z"/><path fill="#800080" d="M2,2h1v1h-1zM9,3h1v1h-1z"/><path fill="#ff0000" d="M3,5h2v1h-2zM2,6h1v1h-1zM5,6h5v1h-5zM13,6h2v1h-2zM10,7h3v1h-3z"/></svg>
<svg class="a" style="left:308px;top:46px" width="18" height="15" shape-rendering="crispEdges"><path fill="#000000" d="M2,0h1v1h-1zM14,0h1v1h-1zM1,1h2v1h-2zM13,1h3v1h-3zM2,2h1v1h-1zM14,2h1v1h-1zM2,3h1v1h-1zM6,3h1v1h-1zM14,3h1v1h-1zM1,4h2v1h-2zM5,4h3v1h-3zM14,4h1v1h-1zM2,5h1v1h-1zM6,5h1v1h-1zM14,5h1v1h-1zM2,6h1v1h-1zM6,6h1v1h-1zM14,6h1v1h-1zM1,7h2v1h-2zM5,7h3v1h-3zM14,7h1v1h-1zM2,8h1v1h-1zM6,8h1v1h-1zM14,8h1v1h-1zM2,9h1v1h-1zM14,9h1v1h-1zM1,10h2v1h-2zM14,10h1v1h-1zM2,11h1v1h-1zM13,11h3v1h-3zM2,12h1v1h-1zM14,12h1v1h-1zM2,13h15v1h-15zM2,14h1v1h-1zM5,14h1v1h-1zM8,14h1v1h-1zM11,14h1v1h-1zM14,14h1v1h-1z"/><path fill="#ff0000" d="M11,0h2v1h-2zM9,1h2v1h-2zM7,2h2v1h-2zM7,9h2v1h-2zM9,10h2v1h-2zM11,11h2v1h-2z"/></svg>
<svg class="a" style="left:340px;top:46px" width="16" height="15" shape-rendering="crispEdges"><path fill="#000080" d="M0,0h16v1h-16zM0,1h1v1h-1zM2,1h10v1h-10zM13,1h1v1h-1zM15,1h1v1h-1zM0,2h16v1h-16zM0,3h1v1h-1zM15,3h1v1h-1zM0,4h1v1h-1zM15,4h1v1h-1zM0,5h1v1h-1zM15,5h1v1h-1zM0,6h16v1h-16zM0,7h16v1h-16zM0,8h1v1h-1zM2,8h10v1h-10zM13,8h1v1h-1zM15,8h1v1h-1zM0,9h16v1h-16zM0,10h1v1h-1zM15,10h1v1h-1zM0,11h1v1h-1zM15,11h1v1h-1zM0,12h1v1h-1zM15,12h1v1h-1zM0,13h1v1h-1zM15,13h1v1h-1zM0,14h16v1h-16z"/><path fill="#ffffff" d="M1,1h1v1h-1zM12,1h1v1h-1zM14,1h1v1h-1zM1,8h1v1h-1zM12,8h1v1h-1zM14,8h1v1h-1z"/><path fill="#e0e0ff" d="M1,3h14v1h-14zM1,4h14v1h-14zM1,5h14v1h-14zM1,10h14v1h-14zM1,11h14v1h-14zM1,12h14v1h-14zM1,13h14v1h-14z"/></svg>
<svg class="a" style="left:362px;top:46px" width="18" height="15" shape-rendering="crispEdges"><path fill="#000080" d="M1,0h10v1h-10zM3,1h8v1h-8zM1,2h1v1h-1zM10,2h1v1h-1zM1,3h1v1h-1zM10,3h1v1h-1zM1,4h1v1h-1zM4,4h10v1h-10zM1,5h1v1h-1zM4,5h1v1h-1zM6,5h7v1h-7zM1,6h1v1h-1zM4,6h1v1h-1zM13,6h1v1h-1zM1,7h4v1h-4zM13,7h1v1h-1zM4,8h1v1h-1zM7,8h10v1h-10zM4,9h1v1h-1zM7,9h1v1h-1zM9,9h8v1h-8zM4,10h4v1h-4zM16,10h1v1h-1zM7,11h1v1h-1zM16,11h1v1h-1zM7,12h1v1h-1zM16,12h1v1h-1zM7,13h1v1h-1zM16,13h1v1h-1zM7,14h10v1h-10z"/><path fill="#800080" d="M1,1h1v1h-1zM13,5h1v1h-1z"/><path fill="#ffffff" d="M2,1h1v1h-1zM5,5h1v1h-1zM8,9h1v1h-1z"/><path fill="#e0e0ff" d="M2,2h8v1h-8zM2,3h8v1h-8zM2,4h2v1h-2zM2,5h2v1h-2zM2,6h2v1h-2zM5,6h8v1h-8zM5,7h8v1h-8zM5,8h2v1h-2zM5,9h2v1h-2zM8,10h8v1h-8zM8,11h8v1h-8zM8,12h8v1h-8zM8,13h8v1h-8z"/></svg>
<svg class="a" style="left:386px;top:46px" width="17" height="13" shape-rendering="crispEdges"><path fill="#000080" d="M0,0h9v1h-9zM0,1h1v1h-1zM2,1h7v1h-7zM0,2h1v1h-1zM8,2h1v1h-1zM0,3h1v1h-1zM3,3h8v1h-8zM0,4h1v1h-1zM3,4h1v1h-1zM5,4h6v1h-6zM0,5h1v1h-1zM3,5h1v1h-1zM10,5h1v1h-1zM3,6h1v1h-1zM6,6h9v1h-9zM0,7h4v1h-4zM6,7h1v1h-1zM8,7h7v1h-7zM3,8h1v1h-1zM6,8h1v1h-1zM14,8h1v1h-1zM3,9h4v1h-4zM14,9h1v1h-1zM6,10h1v1h-1zM14,10h1v1h-1zM6,11h1v1h-1zM14,11h1v1h-1zM6,12h9v1h-9z"/><path fill="#000000" d="M12,0h4v1h-4zM12,1h2v1h-2zM12,2h1v1h-1zM14,2h1v1h-1zM15,3h1v1h-1zM2,4h1v1h-1zM4,7h1v1h-1zM8,10h5v1h-5z"/><path fill="#ffffff" d="M1,1h1v1h-1zM4,4h1v1h-1zM7,7h1v1h-1z"/><path fill="#e0e0ff" d="M1,2h7v1h-7zM1,3h2v1h-2zM1,4h1v1h-1zM1,5h2v1h-2zM4,5h6v1h-6zM1,6h2v1h-2zM4,6h2v1h-2zM5,7h1v1h-1zM4,8h2v1h-2zM7,8h7v1h-7zM7,9h7v1h-7zM7,10h1v1h-1zM13,10h1v1h-1zM7,11h7v1h-7z"/><path fill="#800080" d="M0,6h1v1h-1z"/></svg>
<svg class="a" style="left:421px;top:46px" width="10" height="14" shape-rendering="crispEdges"><path fill="#000000" d="M2,0h1v1h-1zM7,0h1v1h-1zM2,1h1v1h-1zM7,1h1v1h-1zM2,2h1v1h-1zM7,2h1v1h-1zM2,3h1v1h-1zM6,3h2v1h-2zM2,4h2v1h-2zM6,4h1v1h-1zM3,5h1v1h-1zM5,5h2v1h-2zM3,6h3v1h-3zM4,7h2v1h-2zM4,8h1v1h-1z"/><path fill="#000080" d="M3,8h1v1h-1zM5,8h2v1h-2zM1,9h2v1h-2zM4,9h1v1h-1zM7,9h2v1h-2zM0,10h1v1h-1zM3,10h2v1h-2zM6,10h1v1h-1zM9,10h1v1h-1zM0,11h1v1h-1zM3,11h1v1h-1zM6,11h1v1h-1zM9,11h1v1h-1zM0,12h1v1h-1zM3,12h1v1h-1zM7,12h2v1h-2zM1,13h2v1h-2z"/></svg>
<svg class="a" style="left:441px;top:46px" width="16" height="13" shape-rendering="crispEdges"><path fill="#000000" d="M0,0h7v1h-7zM0,1h1v1h-1zM6,1h2v1h-2zM0,2h1v1h-1zM2,2h2v1h-2zM6,2h1v1h-1zM8,2h1v1h-1zM0,3h1v1h-1zM6,3h4v1h-4zM0,4h1v1h-1zM2,4h4v1h-4zM0,5h1v1h-1zM0,6h1v1h-1zM2,6h4v1h-4zM8,6h2v1h-2zM0,7h1v1h-1zM0,8h6v1h-6zM8,8h5v1h-5zM8,10h5v1h-5z"/><path fill="#ffffff" d="M1,1h5v1h-5zM1,2h1v1h-1zM4,2h2v1h-2zM7,2h1v1h-1zM1,3h5v1h-5zM1,4h1v1h-1zM1,5h5v1h-5zM7,5h4v1h-4zM1,6h1v1h-1zM7,6h1v1h-1zM10,6h1v1h-1zM12,6h1v1h-1zM1,7h5v1h-5zM7,7h4v1h-4zM7,8h1v1h-1zM13,8h1v1h-1zM7,9h7v1h-7zM7,10h1v1h-1zM13,10h1v1h-1zM7,11h7v1h-7z"/><path fill="#000080" d="M6,4h6v1h-6zM6,5h1v1h-1zM11,5h2v1h-2zM6,6h1v1h-1zM11,6h1v1h-1zM13,6h1v1h-1zM6,7h1v1h-1zM11,7h4v1h-4zM6,8h1v1h-1zM14,8h1v1h-1zM6,9h1v1h-1zM14,9h1v1h-1zM6,10h1v1h-1zM14,10h1v1h-1zM6,11h1v1h-1zM14,11h1v1h-1zM6,12h9v1h-9z"/></svg>
<svg class="a" style="left:464px;top:46px" width="15" height="14" shape-rendering="crispEdges"><path fill="#808080" d="M5,0h4v1h-4zM1,1h11v1h-11zM0,2h3v1h-3zM8,2h4v1h-4zM0,3h12v1h-12zM0,4h12v1h-12zM0,5h12v1h-12zM0,6h6v1h-6zM12,6h1v1h-1zM0,7h6v1h-6zM7,7h4v1h-4zM0,8h6v1h-6zM7,8h6v1h-6zM0,9h6v1h-6zM8,9h5v1h-5zM0,10h6v1h-6zM7,10h6v1h-6zM0,11h6v1h-6zM7,11h6v1h-6zM1,12h5v1h-5zM7,12h6v1h-6z"/><path fill="#ffffff" d="M3,2h5v1h-5zM12,2h1v1h-1zM12,3h1v1h-1zM12,4h1v1h-1zM12,5h1v1h-1zM6,6h6v1h-6zM13,6h1v1h-1zM6,7h1v1h-1zM11,7h3v1h-3zM6,8h1v1h-1zM13,8h1v1h-1zM6,9h2v1h-2zM13,9h1v1h-1zM6,10h1v1h-1zM13,10h1v1h-1zM6,11h1v1h-1zM13,11h1v1h-1zM6,12h1v1h-1zM13,12h1v1h-1zM2,13h12v1h-12z"/></svg>
<svg class="a" style="left:487px;top:47px" width="15" height="14" shape-rendering="crispEdges"><path fill="#000000" d="M2,0h4v1h-4zM8,0h4v1h-4zM2,1h1v1h-1zM4,1h2v1h-2zM8,1h1v1h-1zM10,1h2v1h-2zM2,2h4v1h-4zM8,2h4v1h-4zM1,3h6v1h-6zM8,3h6v1h-6zM1,4h1v1h-1zM3,4h6v1h-6zM10,4h4v1h-4zM0,5h15v1h-15zM0,6h2v1h-2zM3,6h2v1h-2zM6,6h3v1h-3zM10,6h2v1h-2zM13,6h2v1h-2zM0,7h2v1h-2zM3,7h2v1h-2zM6,7h3v1h-3zM10,7h2v1h-2zM13,7h2v1h-2zM0,8h7v1h-7zM8,8h7v1h-7zM0,9h6v1h-6zM9,9h6v1h-6zM0,10h1v1h-1zM2,10h4v1h-4zM9,10h2v1h-2zM12,10h3v1h-3zM0,11h1v1h-1zM2,11h4v1h-4zM9,11h2v1h-2zM12,11h3v1h-3zM0,12h6v1h-6zM9,12h6v1h-6zM0,13h6v1h-6zM9,13h6v1h-6z"/><path fill="#ffffff" d="M3,1h1v1h-1zM9,1h1v1h-1zM2,4h1v1h-1zM9,4h1v1h-1zM2,6h1v1h-1zM5,6h1v1h-1zM9,6h1v1h-1zM12,6h1v1h-1zM2,7h1v1h-1zM5,7h1v1h-1zM9,7h1v1h-1zM12,7h1v1h-1zM1,10h1v1h-1zM11,10h1v1h-1zM1,11h1v1h-1zM11,11h1v1h-1z"/></svg>
<svg class="a" style="left:518px;top:47px" width="15" height="13" shape-rendering="crispEdges"><path fill="#000000" d="M4,0h7v1h-7zM4,1h1v1h-1zM10,1h2v1h-2zM4,2h1v1h-1zM6,2h1v1h-1zM8,2h1v1h-1zM11,2h1v1h-1zM4,3h1v1h-1zM10,3h2v1h-2zM1,4h13v1h-13zM0,5h1v1h-1zM2,5h1v1h-1zM13,5h1v1h-1zM0,6h2v1h-2zM13,6h1v1h-1zM0,7h1v1h-1zM13,7h1v1h-1zM0,8h1v1h-1zM13,8h1v1h-1zM0,9h1v1h-1zM13,9h1v1h-1zM0,10h1v1h-1zM13,10h1v1h-1zM0,11h14v1h-14zM3,12h10v1h-10z"/><path fill="#ffffff" d="M5,1h5v1h-5zM5,2h1v1h-1zM7,2h1v1h-1zM9,2h2v1h-2zM5,3h5v1h-5zM1,5h1v1h-1zM3,5h10v1h-10zM2,6h1v1h-1zM4,6h1v1h-1zM6,6h1v1h-1zM8,6h1v1h-1zM10,6h1v1h-1zM12,6h1v1h-1zM1,7h1v1h-1zM3,7h1v1h-1zM5,7h1v1h-1zM7,7h1v1h-1zM9,7h1v1h-1zM11,7h1v1h-1zM1,8h2v1h-2zM4,8h1v1h-1zM6,8h1v1h-1zM8,8h1v1h-1zM10,8h1v1h-1zM12,8h1v1h-1zM1,9h1v1h-1zM3,9h1v1h-1zM5,9h1v1h-1zM7,9h1v1h-1zM9,9h1v1h-1zM11,9h1v1h-1zM1,10h12v1h-12z"/><path fill="#808080" d="M3,6h1v1h-1zM5,6h1v1h-1zM7,6h1v1h-1zM9,6h1v1h-1zM11,6h1v1h-1zM2,7h1v1h-1zM4,7h1v1h-1zM6,7h1v1h-1zM8,7h1v1h-1zM10,7h1v1h-1zM12,7h1v1h-1zM3,8h1v1h-1zM5,8h1v1h-1zM7,8h1v1h-1zM9,8h1v1h-1zM11,8h1v1h-1zM2,9h1v1h-1zM4,9h1v1h-1zM6,9h1v1h-1zM8,9h1v1h-1zM10,9h1v1h-1zM12,9h1v1h-1z"/></svg>
<svg class="a" style="left:540px;top:46px" width="17" height="13" shape-rendering="crispEdges"><path fill="#000000" d="M5,0h10v1h-10zM4,1h1v1h-1zM14,1h1v1h-1zM4,2h1v1h-1zM6,2h6v1h-6zM13,2h1v1h-1zM3,3h1v1h-1zM13,3h1v1h-1zM3,4h1v1h-1zM5,4h7v1h-7zM2,5h11v1h-11zM1,6h1v1h-1zM13,6h1v1h-1zM15,6h1v1h-1zM0,7h14v1h-14zM15,7h1v1h-1zM0,8h1v1h-1zM14,8h2v1h-2zM0,9h1v1h-1zM14,9h1v1h-1zM0,10h14v1h-14zM15,10h1v1h-1zM0,11h1v1h-1zM13,11h1v1h-1zM15,11h1v1h-1zM0,12h15v1h-15z"/><path fill="#ffffff" d="M5,1h9v1h-9zM5,2h1v1h-1zM12,2h1v1h-1zM4,3h9v1h-9zM4,4h1v1h-1zM12,4h1v1h-1zM14,5h1v1h-1zM2,6h11v1h-11zM1,8h1v1h-1zM1,9h1v1h-1zM1,11h1v1h-1z"/><path fill="#808080" d="M13,4h2v1h-2zM13,5h1v1h-1zM15,5h1v1h-1zM14,6h1v1h-1zM14,7h1v1h-1zM15,9h1v1h-1zM14,10h1v1h-1zM14,11h1v1h-1z"/><path fill="#e0e0ff" d="M2,8h12v1h-12zM2,9h5v1h-5zM10,9h4v1h-4zM2,11h11v1h-11z"/><path fill="#ffff00" d="M7,9h3v1h-3z"/></svg>
<svg class="a" style="left:573px;top:46px" width="15" height="15" shape-rendering="crispEdges"><path fill="#808080" d="M4,0h4v1h-4zM4,1h3v1h-3zM4,2h3v1h-3zM3,3h3v1h-3zM3,4h3v1h-3zM3,5h3v1h-3zM2,6h3v1h-3zM2,7h3v1h-3zM2,8h2v1h-2zM1,9h3v1h-3zM1,10h2v1h-2zM0,11h2v1h-2zM0,12h1v1h-1zM0,13h14v1h-14z"/><path fill="#ffffff" d="M7,1h1v1h-1zM7,2h1v1h-1zM6,3h1v1h-1zM6,4h1v1h-1zM6,5h1v1h-1zM5,6h1v1h-1zM5,7h1v1h-1zM4,8h1v1h-1zM4,9h1v1h-1zM3,10h1v1h-1zM2,11h1v1h-1zM1,12h1v1h-1zM1,14h14v1h-14z"/></svg>
<svg class="a" style="left:594px;top:46px" width="16" height="15" shape-rendering="crispEdges"><path fill="#808080" d="M7,0h1v1h-1zM7,1h1v1h-1zM7,2h1v1h-1zM7,3h1v1h-1zM7,4h1v1h-1zM7,5h1v1h-1zM7,6h1v1h-1zM0,7h15v1h-15zM1,8h2v1h-2zM13,8h2v1h-2zM2,9h2v1h-2zM12,9h2v1h-2zM3,10h2v1h-2zM11,10h2v1h-2zM4,11h2v1h-2zM10,11h2v1h-2zM5,12h2v1h-2zM9,12h2v1h-2zM6,13h4v1h-4zM7,14h2v1h-2z"/><path fill="#ffffff" d="M8,0h1v1h-1zM8,1h1v1h-1zM8,2h1v1h-1zM8,3h1v1h-1zM8,4h1v1h-1zM8,5h1v1h-1zM8,6h1v1h-1zM15,7h1v1h-1zM15,8h1v1h-1zM14,9h1v1h-1zM13,10h1v1h-1zM12,11h1v1h-1zM11,12h1v1h-1zM10,13h1v1h-1zM9,14h1v1h-1z"/></svg>
<svg class="a" style="left:617px;top:47px" width="16" height="15" shape-rendering="crispEdges"><path fill="#808080" d="M2,0h12v1h-12zM1,1h2v1h-2zM13,1h2v1h-2zM0,2h2v1h-2zM13,2h2v1h-2zM0,3h2v1h-2zM6,3h3v1h-3zM13,3h2v1h-2zM0,4h2v1h-2zM5,4h2v1h-2zM8,4h2v1h-2zM13,4h2v1h-2zM0,5h2v1h-2zM5,5h1v1h-1zM8,5h1v1h-1zM13,5h2v1h-2zM0,6h2v1h-2zM5,6h4v1h-4zM13,6h2v1h-2zM0,7h2v1h-2zM5,7h1v1h-1zM8,7h1v1h-1zM13,7h2v1h-2zM0,8h2v1h-2zM5,8h1v1h-1zM8,8h1v1h-1zM13,8h2v1h-2zM0,9h2v1h-2zM13,9h2v1h-2zM1,10h13v1h-13zM7,11h2v1h-2zM7,12h1v1h-1zM7,13h1v1h-1z"/><path fill="#ffffff" d="M3,1h10v1h-10zM2,2h1v1h-1zM15,2h1v1h-1zM15,3h1v1h-1zM7,4h1v1h-1zM15,4h1v1h-1zM6,5h1v1h-1zM9,5h1v1h-1zM15,5h1v1h-1zM9,6h1v1h-1zM15,6h1v1h-1zM6,7h1v1h-1zM9,7h1v1h-1zM15,7h1v1h-1zM6,8h1v1h-1zM9,8h1v1h-1zM15,8h1v1h-1zM6,9h1v1h-1zM9,9h1v1h-1zM15,9h1v1h-1zM14,10h1v1h-1zM2,11h5v1h-5zM9,11h6v1h-6zM8,12h1v1h-1zM8,13h1v1h-1zM8,14h1v1h-1z"/></svg>
<svg class="a" style="left:642px;top:46px" width="13" height="15" shape-rendering="crispEdges"><path fill="#808080" d="M5,0h2v1h-2zM6,1h2v1h-2zM8,2h2v1h-2zM10,3h2v1h-2zM8,4h2v1h-2zM6,5h2v1h-2zM4,6h2v1h-2zM2,7h2v1h-2zM0,8h2v1h-2zM1,9h2v1h-2zM3,10h2v1h-2zM5,11h1v1h-1zM5,12h1v1h-1zM5,13h1v1h-1z"/><path fill="#ffffff" d="M8,1h1v1h-1zM10,2h1v1h-1zM12,3h1v1h-1zM10,4h1v1h-1zM8,5h1v1h-1zM6,6h1v1h-1zM4,7h1v1h-1zM2,8h1v1h-1zM3,9h1v1h-1zM5,10h1v1h-1zM6,11h1v1h-1zM6,12h1v1h-1zM6,13h1v1h-1zM6,14h1v1h-1z"/></svg>
<svg class="a" style="left:664px;top:46px" width="14" height="15" shape-rendering="crispEdges"><path fill="#808080" d="M6,0h1v1h-1zM6,1h1v1h-1zM6,2h1v1h-1zM6,3h1v1h-1zM6,4h1v1h-1zM0,5h13v1h-13zM0,6h13v1h-13zM0,9h13v1h-13zM0,10h13v1h-13zM6,12h1v1h-1zM6,13h1v1h-1zM6,14h1v1h-1z"/><path fill="#ffffff" d="M7,0h1v1h-1zM7,1h1v1h-1zM7,2h1v1h-1zM7,3h1v1h-1zM7,4h1v1h-1zM13,6h1v1h-1zM1,7h13v1h-13zM13,10h1v1h-1zM1,11h13v1h-13zM7,12h1v1h-1zM7,13h1v1h-1zM7,14h1v1h-1z"/></svg>
<svg class="a" style="left:690px;top:46px" width="8" height="14" shape-rendering="crispEdges"><path fill="#808080" d="M0,0h2v1h-2zM2,1h2v1h-2zM4,2h1v1h-1zM4,3h1v1h-1zM3,4h1v1h-1zM1,5h2v1h-2zM0,6h2v1h-2zM2,7h2v1h-2zM4,8h1v1h-1zM4,9h1v1h-1zM3,10h1v1h-1zM1,11h2v1h-2zM0,12h2v1h-2z"/><path fill="#ffffff" d="M4,1h1v1h-1zM5,2h1v1h-1zM5,3h1v1h-1zM4,4h1v1h-1zM3,5h1v1h-1zM2,6h1v1h-1zM4,7h1v1h-1zM5,8h1v1h-1zM5,9h1v1h-1zM4,10h1v1h-1zM3,11h1v1h-1zM2,12h1v1h-1zM1,13h2v1h-2z"/></svg>
<svg class="a" style="left:710px;top:46px" width="16" height="14" shape-rendering="crispEdges"><path fill="#808080" d="M7,0h1v1h-1zM7,1h1v1h-1zM0,2h15v1h-15zM1,3h2v1h-2zM13,3h1v1h-1zM2,4h2v1h-2zM12,4h1v1h-1zM3,5h2v1h-2zM11,5h1v1h-1zM4,6h2v1h-2zM10,6h1v1h-1zM5,7h2v1h-2zM9,7h1v1h-1zM6,8h3v1h-3zM7,9h1v1h-1zM0,10h15v1h-15zM7,12h1v1h-1zM7,13h1v1h-1z"/><path fill="#ffffff" d="M8,0h1v1h-1zM8,1h1v1h-1zM15,2h1v1h-1zM14,3h1v1h-1zM13,4h1v1h-1zM12,5h1v1h-1zM11,6h1v1h-1zM10,7h1v1h-1zM9,8h1v1h-1zM8,9h1v1h-1zM15,10h1v1h-1zM1,11h15v1h-15zM8,12h1v1h-1zM8,13h1v1h-1z"/></svg>
<svg class="a" style="left:732px;top:47px" width="18" height="13" shape-rendering="crispEdges"><path fill="#808080" d="M3,0h7v1h-7zM3,1h2v1h-2zM9,1h3v1h-3zM0,2h5v1h-5zM11,2h2v1h-2zM3,3h2v1h-2zM12,3h2v1h-2zM3,4h2v1h-2zM13,4h1v1h-1zM3,5h2v1h-2zM14,5h4v1h-4zM3,6h2v1h-2zM14,6h1v1h-1zM3,7h2v1h-2zM14,7h1v1h-1zM3,8h2v1h-2zM13,8h1v1h-1zM0,9h5v1h-5zM12,9h2v1h-2zM3,10h2v1h-2zM11,10h2v1h-2zM3,11h9v1h-9z"/><path fill="#ffffff" d="M5,1h4v1h-4zM5,2h1v1h-1zM13,2h1v1h-1zM1,3h2v1h-2zM5,3h1v1h-1zM14,3h1v1h-1zM5,4h1v1h-1zM14,4h1v1h-1zM5,5h1v1h-1zM5,6h1v1h-1zM15,6h3v1h-3zM5,7h1v1h-1zM15,7h1v1h-1zM5,8h1v1h-1zM14,8h1v1h-1zM5,9h1v1h-1zM14,9h1v1h-1zM1,10h2v1h-2zM5,10h1v1h-1zM13,10h1v1h-1zM12,11h1v1h-1zM4,12h8v1h-8z"/></svg>
<svg class="a" style="left:756px;top:46px" width="16" height="14" shape-rendering="crispEdges"><path fill="#808080" d="M5,0h2v1h-2zM10,0h2v1h-2zM4,1h1v1h-1zM7,1h1v1h-1zM9,1h1v1h-1zM12,1h1v1h-1zM4,2h1v1h-1zM7,2h1v1h-1zM9,2h1v1h-1zM12,2h3v1h-3zM3,3h1v1h-1zM6,3h3v1h-3zM11,3h1v1h-1zM14,3h1v1h-1zM3,4h1v1h-1zM6,4h1v1h-1zM9,4h1v1h-1zM14,4h1v1h-1zM2,5h1v1h-1zM5,5h1v1h-1zM8,5h1v1h-1zM11,5h1v1h-1zM14,5h1v1h-1zM0,6h3v1h-3zM5,6h1v1h-1zM8,6h1v1h-1zM11,6h1v1h-1zM14,6h1v1h-1zM0,7h1v1h-1zM3,7h1v1h-1zM14,7h1v1h-1zM1,8h1v1h-1zM13,8h1v1h-1zM2,9h1v1h-1zM13,9h1v1h-1zM3,10h1v1h-1zM12,10h1v1h-1zM4,11h1v1h-1zM12,11h1v1h-1zM5,12h7v1h-7z"/><path fill="#ffffff" d="M5,1h2v1h-2zM10,1h2v1h-2zM5,2h2v1h-2zM10,2h2v1h-2zM4,3h2v1h-2zM9,3h2v1h-2zM12,3h2v1h-2zM4,4h2v1h-2zM7,4h2v1h-2zM10,4h4v1h-4zM3,5h2v1h-2zM6,5h2v1h-2zM9,5h2v1h-2zM12,5h2v1h-2zM3,6h2v1h-2zM6,6h2v1h-2zM9,6h2v1h-2zM12,6h2v1h-2zM1,7h2v1h-2zM4,7h10v1h-10zM2,8h11v1h-11zM3,9h10v1h-10zM4,10h8v1h-8zM5,11h7v1h-7zM6,13h6v1h-6z"/></svg>
<svg class="a" style="left:779px;top:47px" width="15" height="13" shape-rendering="crispEdges"><path fill="#808080" d="M5,0h3v1h-3zM3,1h2v1h-2zM7,1h3v1h-3zM2,2h1v1h-1zM4,2h1v1h-1zM6,2h1v1h-1zM8,2h1v1h-1zM10,2h1v1h-1zM2,3h1v1h-1zM4,3h1v1h-1zM6,3h1v1h-1zM8,3h1v1h-1zM10,3h2v1h-2zM0,4h3v1h-3zM4,4h1v1h-1zM6,4h1v1h-1zM8,4h1v1h-1zM10,4h1v1h-1zM0,5h1v1h-1zM2,5h1v1h-1zM10,5h1v1h-1zM0,6h1v1h-1zM10,6h1v1h-1zM1,7h1v1h-1zM10,7h1v1h-1zM2,8h1v1h-1zM9,8h1v1h-1zM3,9h1v1h-1zM9,9h1v1h-1zM3,10h1v1h-1zM9,10h1v1h-1zM3,11h7v1h-7z"/><path fill="#ffffff" d="M5,1h2v1h-2zM3,2h1v1h-1zM5,2h1v1h-1zM7,2h1v1h-1zM9,2h1v1h-1zM3,3h1v1h-1zM5,3h1v1h-1zM7,3h1v1h-1zM9,3h1v1h-1zM3,4h1v1h-1zM5,4h1v1h-1zM7,4h1v1h-1zM9,4h1v1h-1zM11,4h1v1h-1zM1,5h1v1h-1zM3,5h7v1h-7zM11,5h1v1h-1zM1,6h9v1h-9zM11,6h1v1h-1zM2,7h8v1h-8zM11,7h1v1h-1zM3,8h6v1h-6zM10,8h1v1h-1zM4,9h5v1h-5zM10,9h1v1h-1zM4,10h5v1h-5zM10,10h1v1h-1zM10,11h1v1h-1zM4,12h6v1h-6z"/></svg>
<svg class="a" style="left:802px;top:47px" width="16" height="13" shape-rendering="crispEdges"><path fill="#000000" d="M6,1h1v1h-1zM9,1h1v1h-1zM4,2h2v1h-2zM11,2h1v1h-1zM1,3h1v1h-1zM3,3h1v1h-1zM12,3h1v1h-1zM1,4h2v1h-2zM13,4h1v1h-1zM1,5h3v1h-3zM13,5h1v1h-1zM0,6h5v1h-5zM13,6h1v1h-1zM13,7h1v1h-1zM13,8h1v1h-1zM12,9h1v1h-1zM12,10h1v1h-1zM5,11h2v1h-2zM10,11h2v1h-2zM7,12h3v1h-3z"/><path fill="#808000" d="M7,1h2v1h-2zM10,2h1v1h-1z"/></svg>
<svg class="a" style="left:825px;top:47px" width="16" height="14" shape-rendering="crispEdges"><path fill="#808080" d="M6,1h4v1h-4zM4,2h2v1h-2zM10,2h2v1h-2zM3,3h1v1h-1zM12,3h1v1h-1zM14,3h1v1h-1zM2,4h1v1h-1zM13,4h2v1h-2zM2,5h1v1h-1zM12,5h3v1h-3zM2,6h1v1h-1zM11,6h4v1h-4zM2,7h1v1h-1zM2,8h1v1h-1zM3,9h1v1h-1zM3,10h1v1h-1zM4,11h2v1h-2zM10,11h2v1h-2zM6,12h4v1h-4z"/><path fill="#ffffff" d="M6,2h4v1h-4zM4,3h1v1h-1zM3,4h1v1h-1zM3,5h1v1h-1zM3,6h1v1h-1zM15,6h1v1h-1zM3,7h1v1h-1zM15,7h1v1h-1zM3,8h1v1h-1zM4,9h1v1h-1zM4,10h1v1h-1zM6,11h1v1h-1zM12,11h1v1h-1zM10,12h2v1h-2zM7,13h4v1h-4z"/></svg>
<svg class="a" style="left:847px;top:46px" width="17" height="15" shape-rendering="crispEdges"><path fill="#808080" d="M5,0h6v1h-6zM3,1h2v1h-2zM11,1h2v1h-2zM2,2h1v1h-1zM12,2h3v1h-3zM1,3h1v1h-1zM10,3h4v1h-4zM11,4h2v1h-2zM0,6h6v1h-6zM0,7h2v1h-2zM8,7h9v1h-9zM0,8h2v1h-2zM8,8h1v1h-1zM12,8h1v1h-1zM16,8h1v1h-1zM0,9h5v1h-5zM8,9h1v1h-1zM12,9h1v1h-1zM16,9h1v1h-1zM0,10h2v1h-2zM8,10h1v1h-1zM12,10h1v1h-1zM16,10h1v1h-1zM0,11h2v1h-2zM0,12h2v1h-2zM0,13h6v1h-6z"/><path fill="#ffffff" d="M5,1h6v1h-6zM3,2h2v1h-2zM11,2h1v1h-1zM2,3h1v1h-1zM14,3h1v1h-1zM2,4h1v1h-1zM13,4h1v1h-1zM6,6h1v1h-1zM2,7h5v1h-5zM2,8h1v1h-1zM9,8h3v1h-3zM13,8h3v1h-3zM5,9h1v1h-1zM9,9h1v1h-1zM13,9h1v1h-1zM2,10h4v1h-4zM9,10h1v1h-1zM13,10h1v1h-1zM2,11h1v1h-1zM9,11h1v1h-1zM13,11h1v1h-1zM16,11h1v1h-1zM2,12h1v1h-1zM6,13h1v1h-1zM1,14h6v1h-6z"/></svg>
<svg class="a" style="left:870px;top:46px" width="17" height="15" shape-rendering="crispEdges"><path fill="#808080" d="M4,0h7v1h-7zM2,1h2v1h-2zM11,1h2v1h-2zM1,2h1v1h-1zM12,2h3v1h-3zM0,3h1v1h-1zM10,3h4v1h-4zM11,4h2v1h-2zM0,6h6v1h-6zM10,6h6v1h-6zM0,7h2v1h-2zM14,7h2v1h-2zM0,8h2v1h-2zM14,8h2v1h-2zM0,9h5v1h-5zM12,9h4v1h-4zM0,10h2v1h-2zM14,10h2v1h-2zM0,11h2v1h-2zM14,11h2v1h-2zM0,12h2v1h-2zM14,12h2v1h-2zM0,13h6v1h-6zM10,13h6v1h-6z"/><path fill="#ffffff" d="M4,1h7v1h-7zM2,2h2v1h-2zM11,2h1v1h-1zM1,3h1v1h-1zM14,3h1v1h-1zM1,4h1v1h-1zM13,4h1v1h-1zM6,6h1v1h-1zM16,6h1v1h-1zM2,7h5v1h-5zM11,7h3v1h-3zM16,7h1v1h-1zM2,8h1v1h-1zM16,8h1v1h-1zM5,9h1v1h-1zM16,9h1v1h-1zM2,10h4v1h-4zM13,10h1v1h-1zM16,10h1v1h-1zM2,11h1v1h-1zM16,11h1v1h-1zM2,12h1v1h-1zM16,12h1v1h-1zM6,13h1v1h-1zM16,13h1v1h-1zM1,14h6v1h-6zM11,14h6v1h-6z"/></svg>
<svg class="a" style="left:893px;top:48px" width="17" height="12" shape-rendering="crispEdges"><path fill="#808080" d="M7,0h2v1h-2zM6,1h3v1h-3zM5,2h2v1h-2zM8,2h1v1h-1zM5,3h1v1h-1zM8,3h1v1h-1zM4,4h2v1h-2zM8,4h1v1h-1zM3,5h2v1h-2zM8,5h1v1h-1zM12,5h4v1h-4zM3,6h6v1h-6zM11,6h2v1h-2zM15,6h2v1h-2zM2,7h2v1h-2zM8,7h1v1h-1zM10,7h2v1h-2zM15,7h2v1h-2zM1,8h2v1h-2zM8,8h1v1h-1zM10,8h1v1h-1zM15,8h2v1h-2zM0,9h2v1h-2zM8,9h1v1h-1zM10,9h1v1h-1zM14,9h3v1h-3zM0,10h1v1h-1zM8,10h1v1h-1zM11,10h3v1h-3zM15,10h2v1h-2z"/><path fill="#ffffff" d="M9,0h1v1h-1zM9,1h1v1h-1zM7,2h1v1h-1zM9,2h1v1h-1zM6,3h1v1h-1zM9,3h1v1h-1zM6,4h1v1h-1zM9,4h1v1h-1zM5,5h1v1h-1zM9,5h1v1h-1zM9,6h1v1h-1zM13,6h2v1h-2zM4,7h4v1h-4zM9,7h1v1h-1zM12,7h1v1h-1zM3,8h1v1h-1zM9,8h1v1h-1zM11,8h1v1h-1zM2,9h1v1h-1zM9,9h1v1h-1zM11,9h1v1h-1zM1,10h1v1h-1zM9,10h2v1h-2zM14,10h1v1h-1zM1,11h1v1h-1zM9,11h1v1h-1zM11,11h3v1h-3zM15,11h2v1h-2z"/></svg>
<svg class="a" style="left:917px;top:50px" width="15" height="10" shape-rendering="crispEdges"><path fill="#808080" d="M3,0h4v1h-4zM9,0h5v1h-5zM3,1h1v1h-1zM6,1h1v1h-1zM9,1h1v1h-1zM13,1h1v1h-1zM3,2h1v1h-1zM6,2h1v1h-1zM9,2h1v1h-1zM13,2h1v1h-1zM3,3h1v1h-1zM6,3h1v1h-1zM9,3h1v1h-1zM13,3h1v1h-1zM0,4h1v1h-1zM3,4h4v1h-4zM9,4h5v1h-5zM9,5h1v1h-1zM9,6h1v1h-1zM9,7h1v1h-1zM9,8h1v1h-1z"/><path fill="#ffffff" d="M7,0h1v1h-1zM14,0h1v1h-1zM4,1h2v1h-2zM7,1h1v1h-1zM10,1h3v1h-3zM14,1h1v1h-1zM4,2h1v1h-1zM7,2h1v1h-1zM10,2h1v1h-1zM14,2h1v1h-1zM4,3h1v1h-1zM7,3h1v1h-1zM10,3h1v1h-1zM14,3h1v1h-1zM1,4h1v1h-1zM7,4h1v1h-1zM14,4h1v1h-1zM1,5h1v1h-1zM4,5h4v1h-4zM10,5h5v1h-5zM10,6h1v1h-1zM10,7h1v1h-1zM10,8h1v1h-1zM10,9h1v1h-1z"/></svg>
<svg class="a" style="left:4px;top:20px" width="17" height="16" shape-rendering="crispEdges"><path fill="#000000" d="M2,0h1v1h-1zM0,1h3v1h-3zM2,2h1v1h-1zM2,3h1v1h-1zM0,4h3v1h-3zM2,5h1v1h-1zM2,6h1v1h-1zM0,7h3v1h-3zM2,8h1v1h-1zM2,9h1v1h-1zM0,10h3v1h-3zM2,11h1v1h-1zM2,12h1v1h-1zM0,13h17v1h-17zM2,14h1v1h-1zM5,14h1v1h-1zM8,14h1v1h-1zM11,14h1v1h-1zM14,14h1v1h-1zM2,15h1v1h-1zM5,15h1v1h-1zM8,15h1v1h-1zM11,15h1v1h-1zM14,15h1v1h-1z"/><path fill="#ff0000" d="M16,3h1v1h-1zM6,4h3v1h-3zM14,4h3v1h-3zM5,5h5v1h-5zM13,5h3v1h-3zM4,6h3v1h-3zM9,6h2v1h-2zM12,6h3v1h-3zM3,7h2v1h-2zM10,7h4v1h-4zM3,8h1v1h-1zM11,8h2v1h-2z"/></svg>
<svg class="a" style="left:154px;top:72px" width="17" height="16" shape-rendering="crispEdges"><path fill="#000000" d="M2,0h1v1h-1zM0,1h3v1h-3zM2,2h1v1h-1zM2,3h1v1h-1zM0,4h3v1h-3zM2,5h1v1h-1zM2,6h1v1h-1zM0,7h3v1h-3zM2,8h1v1h-1zM2,9h1v1h-1zM0,10h3v1h-3zM2,11h1v1h-1zM2,12h1v1h-1zM0,13h17v1h-17zM2,14h1v1h-1zM5,14h1v1h-1zM8,14h1v1h-1zM11,14h1v1h-1zM14,14h1v1h-1zM2,15h1v1h-1zM5,15h1v1h-1zM8,15h1v1h-1zM11,15h1v1h-1zM14,15h1v1h-1z"/><path fill="#ff0000" d="M16,3h1v1h-1zM6,4h3v1h-3zM14,4h3v1h-3zM5,5h5v1h-5zM13,5h3v1h-3zM4,6h3v1h-3zM9,6h2v1h-2zM12,6h3v1h-3zM3,7h2v1h-2zM10,7h4v1h-4zM3,8h1v1h-1zM11,8h2v1h-2z"/></svg>
<svg class="a" style="left:12px;top:74px" width="12" height="16" shape-rendering="crispEdges"><path fill="#0000ff" d="M9,0h1v1h-1zM8,1h1v1h-1zM7,2h1v1h-1zM3,3h2v1h-2zM6,3h1v1h-1zM3,4h3v1h-3zM3,5h2v1h-2zM3,6h2v1h-2zM0,7h5v1h-5zM3,8h2v1h-2zM3,9h2v1h-2zM3,10h3v1h-3zM3,11h2v1h-2zM6,11h1v1h-1zM8,11h1v1h-1zM7,12h2v1h-2zM6,13h4v1h-4zM8,14h2v1h-2zM10,15h1v1h-1z"/></svg>
<svg class="a" style="left:2px;top:1px" width="16" height="14" shape-rendering="crispEdges"><path fill="#800000" d="M6,3h2v1h-2zM9,3h7v1h-7zM5,4h2v1h-2zM10,4h5v1h-5zM4,5h2v1h-2zM11,5h3v1h-3zM4,6h2v1h-2zM11,6h3v1h-3zM3,7h3v1h-3zM11,7h2v1h-2zM3,8h2v1h-2zM10,8h3v1h-3zM2,9h3v1h-3zM10,9h2v1h-2zM1,10h5v1h-5zM9,10h3v1h-3zM0,11h6v1h-6zM8,11h3v1h-3zM0,12h7v1h-7zM8,12h2v1h-2z"/></svg>
<svg class="a" style="left:972px;top:2px" width="16" height="11" shape-rendering="crispEdges"><path fill="#000000" d="M4,9h6v1h-6zM4,10h6v1h-6z"/></svg>
<svg class="a" style="left:988px;top:2px" width="16" height="11" shape-rendering="crispEdges"><path fill="#000000" d="M5,2h6v1h-6zM5,3h6v1h-6zM5,4h1v1h-1zM10,4h1v1h-1zM3,5h6v1h-6zM10,5h1v1h-1zM3,6h6v1h-6zM10,6h1v1h-1zM3,7h1v1h-1zM8,7h3v1h-3zM3,8h1v1h-1zM8,8h1v1h-1zM3,9h1v1h-1zM8,9h1v1h-1zM3,10h6v1h-6z"/></svg>
<svg class="a" style="left:1006px;top:2px" width="16" height="10" shape-rendering="crispEdges"><path fill="#000000" d="M4,3h2v1h-2zM10,3h2v1h-2zM5,4h2v1h-2zM9,4h2v1h-2zM6,5h4v1h-4zM7,6h2v1h-2zM6,7h4v1h-4zM5,8h2v1h-2zM9,8h2v1h-2zM4,9h2v1h-2zM10,9h2v1h-2z"/></svg>
<svg class="a" style="left:972px;top:21px" width="16" height="11" shape-rendering="crispEdges"><path fill="#000000" d="M4,9h6v1h-6zM4,10h6v1h-6z"/></svg>
<svg class="a" style="left:988px;top:21px" width="16" height="11" shape-rendering="crispEdges"><path fill="#000000" d="M5,2h6v1h-6zM5,3h6v1h-6zM5,4h1v1h-1zM10,4h1v1h-1zM3,5h6v1h-6zM10,5h1v1h-1zM3,6h6v1h-6zM10,6h1v1h-1zM3,7h1v1h-1zM8,7h3v1h-3zM3,8h1v1h-1zM8,8h1v1h-1zM3,9h1v1h-1zM8,9h1v1h-1zM3,10h6v1h-6z"/></svg>
<svg class="a" style="left:1006px;top:21px" width="16" height="10" shape-rendering="crispEdges"><path fill="#000000" d="M4,3h2v1h-2zM10,3h2v1h-2zM5,4h2v1h-2zM9,4h2v1h-2zM6,5h4v1h-4zM7,6h2v1h-2zM6,7h4v1h-4zM5,8h2v1h-2zM9,8h2v1h-2zM4,9h2v1h-2zM10,9h2v1h-2z"/></svg>
</body></html>
